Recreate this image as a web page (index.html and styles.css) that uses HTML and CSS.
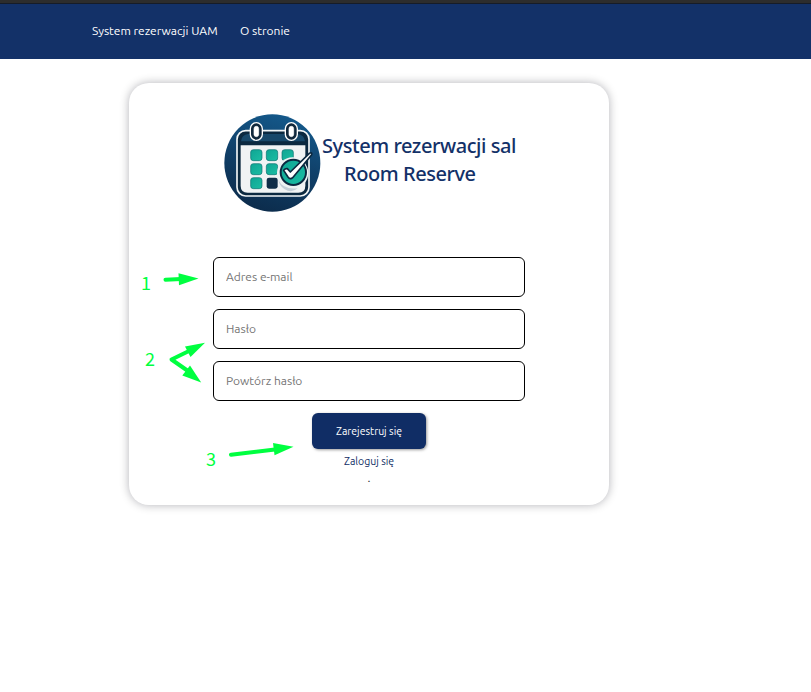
FILE: index.html
```html
<!DOCTYPE html>
<html lang="pl">
<head>
<meta charset="utf-8">
<title>System rezerwacji sal</title>
<link rel="stylesheet" href="styles.css">
</head>
<body>
<header class="navbar">
  <a class="nav-link brand">System rezerwacji UAM</a>
  <a class="nav-link about">O stronie</a>
</header>
<main class="card">
  <div class="logo">
    <svg class="logo-mark" viewBox="27 27 291 294">
      <defs>
        <linearGradient id="sky" x1=".7" y1="0" x2=".4" y2="1"><stop offset="0" stop-color="#145a8c"/><stop offset=".5" stop-color="#104069"/><stop offset="1" stop-color="#0c2c4c"/></linearGradient>
        <linearGradient id="teal" x1="0" y1="0" x2="1" y2="1"><stop offset="0" stop-color="#0fa594"/><stop offset="1" stop-color="#1bbda3"/></linearGradient>
      </defs>
      <ellipse cx="172" cy="174" rx="144" ry="146" fill="url(#sky)"/>
      <rect x="66" y="77" width="216" height="196" rx="26" fill="#0b2940" stroke="#f1f5f6" stroke-width="5"/>
      <path d="M78 109Q80 89 99 87H247Q268 89 270 109Z" fill="#17486a"/>
      <path d="M77 121H271V242Q271 263 250 263H98Q77 263 77 242Z" fill="#f0f3f4"/>
      <g fill="url(#teal)" stroke="#0b6f70" stroke-width="2">
        <rect x="107" y="134" width="34" height="33" rx="8"/><rect x="154" y="134" width="34" height="33" rx="8"/><rect x="201" y="134" width="34" height="33" rx="8"/>
        <rect x="107" y="176" width="34" height="33" rx="8"/><rect x="154" y="176" width="34" height="33" rx="8"/>
        <rect x="107" y="218" width="34" height="33" rx="8"/>
      </g>
      <rect x="155" y="218" width="33" height="33" rx="7" fill="#102e49"/>
      <g stroke="#fff">
        <rect x="106" y="53" width="36" height="53" rx="18" fill="#10283c" stroke-width="4"/><rect x="211" y="53" width="36" height="53" rx="18" fill="#10283c" stroke-width="4"/>
        <rect x="117" y="64" width="14" height="31" rx="7" fill="#fff" stroke-width="2"/><rect x="222" y="64" width="14" height="31" rx="7" fill="#fff" stroke-width="2"/>
      </g>
      <circle cx="233" cy="204" r="47" fill="#eef2f3"/>
      <path d="M190 225Q205 255 248 250Q230 266 208 252Q194 244 190 225Z" fill="#c4cfd8"/>
      <circle cx="235" cy="202" r="38" fill="url(#teal)" stroke="#0b2940" stroke-width="6"/>
      <path d="M206 196Q211 190 217 191L226 201L283 145Q292 141 290 149L233 218Q226 225 219 216Z" fill="#fff" stroke="#0b2940" stroke-width="5" stroke-linejoin="round"/>
    </svg>
    <h1 class="logo-text"><span class="line-one">System rezerwacji sal</span><span class="line-two">Room Reserve</span></h1>
  </div>
  <form class="form">
    <input class="field email" type="email" placeholder="Adres e-mail">
    <input class="field pass" type="password" placeholder="Hasło">
    <input class="field repeat" type="password" placeholder="Powtórz hasło">
    <button class="submit" type="button">Zarejestruj się</button>
    <a class="login">Zaloguj się</a>
    <span class="dot">.</span>
  </form>
</main>
<svg class="arrows" viewBox="0 0 811 692">
  <g stroke="#00ff40" stroke-width="4" stroke-linecap="round" fill="none">
    <path d="M165.500 279.700L181 279"/>
    <path d="M190 350.500L171.500 359.500L188 371" stroke-linejoin="round"/>
    <path d="M231 454.700L275 449.500"/>
  </g>
  <g fill="#00ff40">
    <path d="M178.500 273.200L198.500 278.500L179 285.200Z"/>
    <path d="M185 346.500L205 342.800L190.500 357Z"/>
    <path d="M190 365.500L201.200 382.500L182.300 375.500Z"/>
    <path d="M273 443L293.500 446.700L274.500 455.200Z"/>
  </g>
</svg>
<span class="note one">1</span>
<span class="note two">2</span>
<span class="note three">3</span>
</body>
</html>
```
FILE: styles.css
```css
* { box-sizing: border-box; }
body {
  margin: 0;
  height: 692px;
  overflow: hidden;
  background: #fff;
  font-family: Ubuntu, "Noto Sans", sans-serif;
  position: relative;
}
.navbar {
  height: 59px;
  border-top: 3px solid #2d2d2d;
  box-shadow: inset 0 1px #161c28;
  background: #133168;
  display: flex;
  align-items: center;
  gap: 22px;
  padding-left: 92px;
}
.nav-link {
  color: #fff;
  font-size: 12px;
  line-height: 18px;
  white-space: nowrap;
}
.brand { width: 126px; }
.card {
  width: 480px;
  height: 422px;
  margin: 24px 0 0 129px;
  padding-top: 31px;
  border-radius: 20px;
  background: #fff;
  box-shadow: 0 0 10px rgba(0, 0, 20, .3);
}
.logo {
  display: flex;
  height: 98px;
  padding-left: 95px;
}
.logo-mark { width: 97px; height: 98px; flex: none; }
.logo-text {
  margin: 18px 0 0 1px;
  width: 195px;
  color: #133168;
  font: 500 20px/28px "Noto Sans", sans-serif;
  letter-spacing: -0.45px;
}
.logo-text span { display: block; white-space: nowrap; }
.line-two { padding-left: 22px; }
.form {
  width: 312px;
  margin: 45px auto 0;
  display: flex;
  flex-direction: column;
  align-items: center;
}
.field {
  width: 312px;
  height: 40px;
  margin: 0 0 12px;
  padding: 0 12px 2px;
  border: 1px solid #000;
  border-radius: 6px;
  background: #fff;
  font: 12px/18px Ubuntu, "Noto Sans", sans-serif;
}
.field::placeholder { color: #757575; opacity: 1; }
.submit {
  width: 114px;
  height: 36px;
  padding: 0;
  border: 0;
  border-radius: 6px;
  background: #102d65;
  box-shadow: 1px 1px 3px rgba(0, 0, 0, .4);
  color: #fff;
  font: 10.5px/16px Ubuntu, "Noto Sans", sans-serif;
}
.login {
  margin-top: 4px;
  color: #102d65;
  font-size: 10.5px;
  line-height: 16px;
}
.dot { color: #333; font-size: 12px; line-height: 18px; }
.arrows { position: absolute; left: 0; top: 0; width: 811px; height: 692px; pointer-events: none; }
.note { position: absolute; color: #00ff40; font: 400 18px/24px "Noto Sans CJK JP", sans-serif; }
.one { left: 141px; top: 270px; }
.two { left: 145px; top: 346px; }
.three { left: 206px; top: 446px; }
```
